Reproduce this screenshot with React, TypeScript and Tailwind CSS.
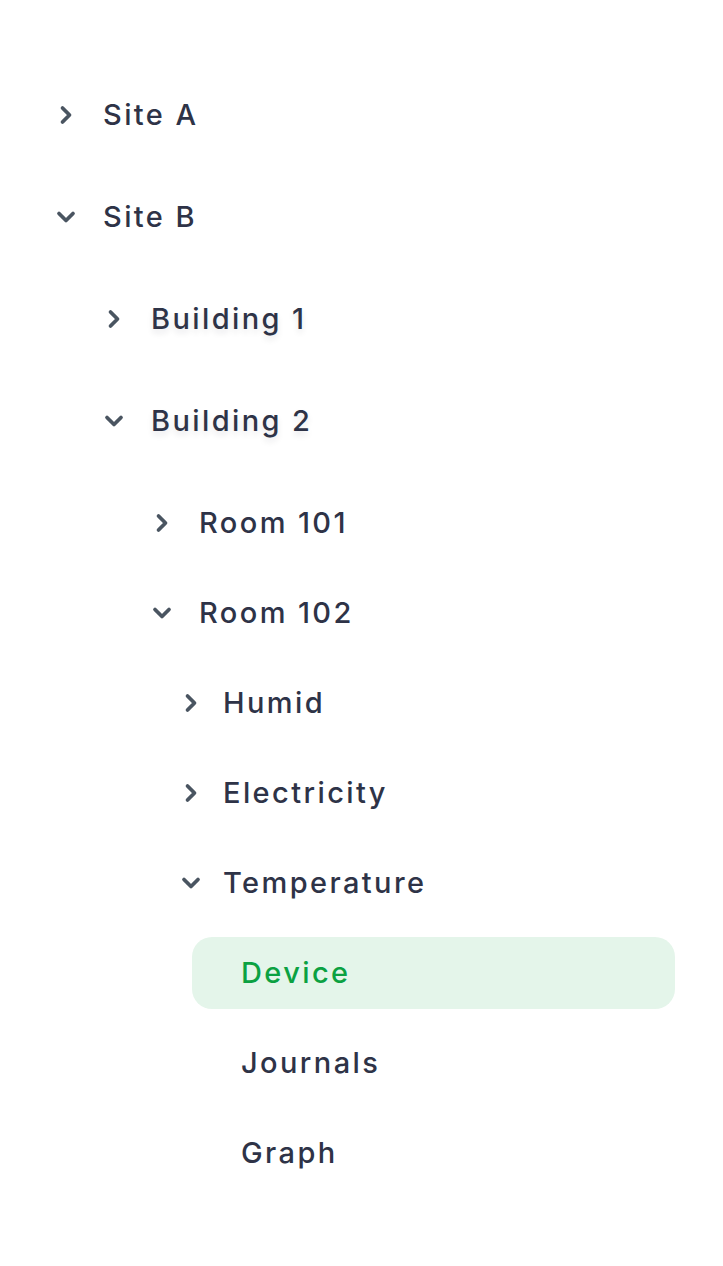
import React from 'react';
import { ChevronRight, ChevronDown } from 'lucide-react';

type Branch = {
  label: string;
  open?: boolean;
  pad: string;
  gap: string;
  shadow?: boolean;
};

const Toggle = ({ label, open, pad, gap, shadow }: Branch) => {
  const Icon = open ? ChevronDown : ChevronRight;
  return (
    <div className={`flex items-center h-[72px] ${pad}`}>
      <span className="w-[28px] flex justify-center text-[#4a5561]">
        <Icon size={28} strokeWidth={3.2} />
      </span>
      <span
        className={`${gap} ${shadow ? '[text-shadow:0_4px_6px_rgba(15,23,42,0.1)]' : ''}`}
      >
        {label}
      </span>
    </div>
  );
};

const Leaf = ({ label, active }: { label: string; active?: boolean }) => (
  <div
    className={`flex items-center h-[72px] ml-[192px] mr-[48px] pl-[49px] rounded-[20px] ${
      active ? 'bg-[#e4f5ea] text-[#0ba142]' : ''
    }`}
  >
    {label}
  </div>
);

export default function App() {
  return (
    <div className="min-h-screen bg-white pt-[79px] text-[29px] font-medium tracking-[2.4px] text-[#2e3347] [font-family:Inter,'Noto_Sans',sans-serif]">
      <div className="flex flex-col gap-[30px]">
        <Toggle label="Site A" pad="pl-[52px]" gap="ml-[23px]" />
        <div className="flex flex-col gap-[30px]">
          <Toggle label="Site B" open pad="pl-[52px]" gap="ml-[23px]" />
          <Toggle label="Building 1" pad="pl-[100px]" gap="ml-[23px]" shadow />
          <div className="flex flex-col gap-[30px]">
            <Toggle label="Building 2" open pad="pl-[100px]" gap="ml-[23px]" shadow />
            <div className="flex flex-col gap-[18px]">
              <Toggle label="Room 101" pad="pl-[148px]" gap="ml-[23px]" />
              <Toggle label="Room 102" open pad="pl-[148px]" gap="ml-[23px]" />
              <Toggle label="Humid" pad="pl-[177px]" gap="ml-[18px]" />
              <Toggle label="Electricity" pad="pl-[177px]" gap="ml-[18px]" />
              <Toggle label="Temperature" open pad="pl-[177px]" gap="ml-[18px]" />
              <Leaf label="Device" active />
              <Leaf label="Journals" />
              <Leaf label="Graph" />
            </div>
          </div>
        </div>
      </div>
    </div>
  );
}
